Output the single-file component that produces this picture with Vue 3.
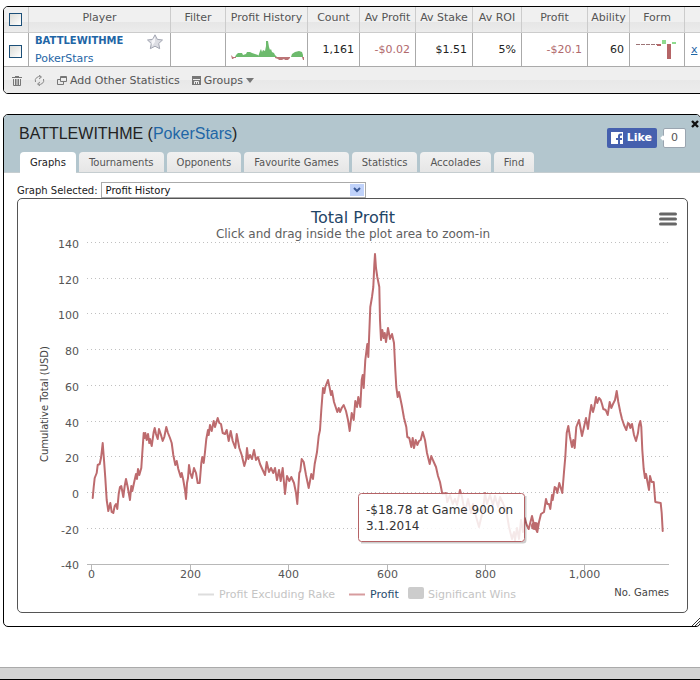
<script setup>
import { ref } from 'vue'

const columns = [
  { key: 'player', label: 'Player' },
  { key: 'filter', label: 'Filter' },
  { key: 'history', label: 'Profit History' },
  { key: 'count', label: 'Count' },
  { key: 'av-profit', label: 'Av Profit' },
  { key: 'av-stake', label: 'Av Stake' },
  { key: 'roi', label: 'Av ROI' },
  { key: 'profit', label: 'Profit' },
  { key: 'ability', label: 'Ability' },
  { key: 'form', label: 'Form' }
]

const stats = [
  { key: 'count', value: '1,161' },
  { key: 'av-profit', value: '-$0.02', loss: true },
  { key: 'av-stake', value: '$1.51' },
  { key: 'roi', value: '5%' },
  { key: 'profit', value: '-$20.1', loss: true },
  { key: 'ability', value: '60' }
]

const tabs = ['Graphs', 'Tournaments', 'Opponents', 'Favourite Games', 'Statistics', 'Accolades', 'Find']
const activeTab = ref('Graphs')
const graph = ref('Profit History')

const yTicks = [140, 120, 100, 80, 60, 40, 20, 0, -20, -40]
const xTicks = [0, 200, 400, 600, 800, 1000]

function yPos(value) {
  return Math.round(493 - value * 1.786) - 0.5
}

function xPos(games) {
  return Math.round(91 + games * 0.4925) + 0.5
}

const profitLine = [
  '92.7,498 93.7,487 94.7,478 96.7,473 97.7,465 99.7,464 101,458 101.7,452 102.7,443 104,460',
  '105.3,478 106.7,500 108.3,511 109.3,507 110.3,503 111.7,512 113.3,513 114.7,506 116,504',
  '117.3,509 118.7,494 120,487 121.3,486 123.3,497 124.7,486 126,479 127.7,487 130,500 131.3,486',
  '132.3,491 134,483 136,474 137,479 138,469 139.3,475 141.3,468 142.7,447 143.7,433 144.7,438',
  '145.3,433 146.7,440 148,434 149.3,443 150,439 151.7,446 153.7,432 154.7,428 156,434 157.7,439',
  '159,429 160.7,434 162.7,441 164.3,437 166.3,427 168,433 170,438 171.7,443 173.3,455 175.3,465',
  '176.7,461 178.3,469 180.7,477 181.7,473 183.3,480 185,490 186,499 187,483 188,478 189,465',
  '190.3,473 192,478 194,468 196,473 197.7,483 199.7,483 201.3,463 202.3,457 203.7,463 205,452',
  '206.3,439 208,430 208.7,435 210,425 211.7,431 213.7,421 215,427 217.7,418 219.3,423 221,424',
  '222.7,433 225,434 226.7,430 228.7,441 230.7,431 232.7,441 235.3,448 236.7,434 239.3,448',
  '241.7,455 244.3,466 246,460 247,448 248.3,459 250,455 252,459 254,450 256,460 258,457 260,464',
  '262.7,470 265,475 266.7,462 269,472 271,468 273.3,473 275,468 277,480 279,470 280.7,481',
  '282.7,468 285,494 287,476 289.3,481 291.3,477 294,483 296,493 297.3,504 298.7,482 299.3,473',
  '300.3,471 301.7,459 303.7,462 306,475 308.7,488 311.3,474 313,479 314.7,464 317,452 318.7,436',
  '320,430 321.3,410 323,388 324.3,393 325.3,387 328,380 329.7,388 331,395 332,391 334,402',
  '337.3,412 338.7,408 340,412 341.7,408 343.7,405 346,411 348,420 349.7,431 351.7,413 353.7,420',
  '355.3,401 357,407 358.3,397 360.3,407 361.7,380 362.7,375 363.7,388 365.3,360 367.3,344',
  '368.3,357 370.3,307 372,297 373.3,287 374.3,265 375,254 376,268 377.3,277 379.3,287 380,320',
  '381,340 382.3,330 383.7,338 384.7,333 386,342 388,328 390,339 392,334 394,343 395.3,370',
  '396.3,387 397.7,397 399,392 401.7,405 404,418 406.3,427 407.3,437 409.3,438 411.3,447 412.7,438',
  '414,448 415.7,440 417.3,445 419,441 420.7,440 422.7,432 425,440 427,453 429.7,464 431.3,456',
  '433.3,461 436,467 438,476 440,482 442.3,494 446,493 447.3,502 450,495 452.7,504 455,499 457,505',
  '460,490 462,497 465,513 468,499 471,513 473,504 475,513 479,527 483,510 485,493 487,504 490,495',
  '493,505 495,496 498,507 500,497 503,503 506.7,513 509,527 512,539 514,532 515,540 517,528',
  '519,539 521,520 523,532 524.7,518 526.7,525 528.7,529 532,516 534,525 537.3,532 539,522',
  '541,514 544,512 546,499 547.3,504 549,504 550.3,509 552,495 552.7,500 554.7,487 556,488',
  '557.3,493 559.3,483 562.3,493 564,472 565.3,457 566.7,433 568.3,426 570,437 572,447 573.3,440',
  '574.7,448 576.3,427 579,420 582,436 584,427 586,418 588,429 589.7,415 591.3,405 593,412',
  '594.3,407 596,397 597.3,403 599,398 600.7,400 602,404 603.3,409 605.7,410 607.7,415 609.7,402',
  '611.3,408 613,404 615,400 616.7,391 618.3,402 620.3,412 622,419 624,425 626.3,430 628,423',
  '629.3,424 630.3,428 632,424 634,435 636,441 638,433 639,425 640.3,421 641.3,427 642.3,450',
  '643.7,469 645,478 646,474 649,490 650,476 651.7,482 653.7,482 655.3,502 660.7,503 661.7,513',
  '662.7,531'
].join(' ')
</script>

<template>
  <div class="page">
    <section class="panel results">
      <table>
        <thead>
          <tr>
            <th class="col-check"><input type="checkbox" aria-label="Select all players" /></th>
            <th v-for="col in columns" :key="col.key" :class="'col-' + col.key">{{ col.label }}</th>
            <th class="col-remove"></th>
          </tr>
        </thead>
        <tbody>
          <tr>
            <td class="col-check"><input type="checkbox" aria-label="Select BATTLEWITHME" /></td>
            <td class="player">
              <div class="player-cell">
                <div class="names">
                  <a href="#" class="name">BATTLEWITHME</a>
                  <a href="#" class="network">PokerStars</a>
                </div>
                <button class="star" aria-label="Favourite">
                  <svg width="16" height="16" viewBox="0 0 16 16">
                    <path d="M8 .8 10.300 5.300l5.200.7-3.800 3.500 1 5.200L8 12.200l-4.700 2.500 1-5.200L.5 6l5.200-.7z" fill="#dcdde3" stroke="#a3a6b2" />
                    <path d="M8 3v5L5 12l-.5-5z" fill="#f6f6f9" />
                  </svg>
                </button>
              </div>
            </td>
            <td></td>
            <td class="spark">
              <svg width="76" height="24" viewBox="0 0 76 24">
                <path d="M6 18l1-2 2-2h4l1 2 3-1 1-2h3l2 1 3 1 3 1 1 2zM29 18l1-3 1-3 1-2 1 3 1-2 2 1 1-5V2h2l1 6 1 3 1-1 1 3 2 1 1 2 2 2zM62 18l1-3 3-2 4-1 3 1 1 3v2z" fill="#6dba6d" />
                <path d="M2 16l2 2h3v1H5l-1 1H3zM46 18h15v1l-2 2h-3l-1-1-2 1h-3l-1-1-3-1zM73 18h2v3h-1z" fill="#bb7476" />
              </svg>
            </td>
            <td v-for="stat in stats" :key="stat.key" class="number" :class="{ loss: stat.loss }">{{ stat.value }}</td>
            <td class="spark">
              <svg width="42" height="24" viewBox="0 0 42 24">
                <path d="M0 5.500h21" stroke="#9d7476" stroke-dasharray="4 1" />
                <path d="M21 5h4v2h-4zM31 5h4v15h-4z" fill="#b56567" />
                <path d="M26 1h4v4h-4zM36 3h4v2h-4z" fill="#8edb8e" />
              </svg>
            </td>
            <td class="remove"><a href="#">x</a></td>
          </tr>
        </tbody>
      </table>
      <div class="toolbar">
        <button class="tool" aria-label="Delete">
          <svg width="10" height="11" viewBox="0 0 10 11">
            <path d="M0 2.500h10M3 1.500h4M1.500 4v6.500h7V4M3.500 4v6M5 4v6M6.500 4v6" fill="none" stroke="#777" />
          </svg>
        </button>
        <button class="tool" aria-label="Refresh">
          <svg width="11" height="11" viewBox="0 0 11 11">
            <path d="M1.500 7A4 4 0 0 1 7 2M9.500 4A4 4 0 0 1 4 9M5 0l2.500 2L5 4M6 7 3.500 9 6 11" fill="none" stroke="#888" />
          </svg>
        </button>
        <button class="tool">
          <svg width="10" height="9" viewBox="0 0 10 9">
            <path d="M3.500.5h6v5h-6zM3.500 1.500h6M3 3.500H.5v5h6V6" fill="none" stroke="#777" />
          </svg>
          <span>Add Other Statistics</span>
        </button>
        <button class="tool">
          <svg width="9" height="9" viewBox="0 0 9 9">
            <path d="M0 0h9v9H0z" fill="#777" />
            <path d="M1 3.500h7M2.500 8V5.500h4V8M4.500 6v2" fill="none" stroke="#eee" />
          </svg>
          <span>Groups</span>
          <svg width="8" height="5" viewBox="0 0 8 5"><path d="M0 0h8L4 5z" fill="#777" /></svg>
        </button>
      </div>
    </section>

    <section class="panel detail">
      <header>
        <div class="title-row">
          <h1>BATTLEWITHME (<a href="#">PokerStars</a>)</h1>
          <div class="like">
            <button class="like-button">
              <svg width="12" height="12" viewBox="0 0 12 12">
                <path d="M0 0h12v12H9V8h2V6H9V4.500q0-1 1-1h1v-2H9.500Q7 1.500 7 4v2H5v2h2v4H0z" fill="#fff" />
              </svg>
              <span>Like</span>
            </button>
            <span class="like-count">0</span>
          </div>
          <button class="close" aria-label="Close">
            <svg width="8" height="8" viewBox="0 0 8 8">
              <path d="m1 1 6 6M7 1 1 7" stroke="#111" stroke-width="2.400" />
            </svg>
          </button>
        </div>
        <nav>
          <button
            v-for="tab in tabs"
            :key="tab"
            :class="{ active: tab === activeTab }"
            @click="activeTab = tab"
          >{{ tab }}</button>
        </nav>
      </header>

      <div class="content">
        <div class="selector">
          <label for="graph">Graph Selected:</label>
          <div class="select-box">
            <select id="graph" v-model="graph">
              <option>Profit History</option>
            </select>
            <span class="arrow">
              <svg width="8" height="6" viewBox="0 0 8 6"><path d="m1 1 3 3 3-3" fill="none" stroke="#3c5a96" stroke-width="2" /></svg>
            </span>
          </div>
        </div>

        <div class="chart">
          <svg class="plot" viewBox="18 199 669 413">
            <text class="chart-title" x="353" y="223">Total Profit</text>
            <text class="subtitle" x="353" y="238">Click and drag inside the plot area to zoom-in</text>

            <g v-for="tick in yTicks" :key="tick">
              <line v-if="tick !== -40" class="grid" x1="87" x2="669" :y1="yPos(tick)" :y2="yPos(tick)" />
              <text class="axis y" x="79" :y="yPos(tick) + 5">{{ tick }}</text>
            </g>
            <path class="axis-line" d="M87 564.5H669" />
            <g v-for="tick in xTicks" :key="tick">
              <path class="axis-line" :d="`M${xPos(tick)} 565v5`" />
              <text class="axis x" :x="xPos(tick)" y="578">{{ tick.toLocaleString('en-US') }}</text>
            </g>
            <text class="axis-name" text-anchor="middle" transform="translate(48 404) rotate(-90)">Cumulative Total (USD)</text>
            <text class="axis-name" text-anchor="end" x="669" y="596">No. Games</text>

            <polyline class="profit" :points="profitLine" />
            <circle cx="535" cy="526" r="4" fill="#bd6b6e" />

            <g class="tooltip">
              <path class="shadow" d="M361 542.500h162q2.500 0 2.500-2.500v-44" />
              <rect x="358.5" y="493.5" width="166" height="48" rx="3" />
              <text x="366" y="514">-$18.78 at Game 900 on</text>
              <text x="366" y="530">3.1.2014</text>
            </g>

            <g class="legend">
              <path d="M198 594.5h16" stroke="#ddd" stroke-width="2" />
              <text x="219" y="598">Profit Excluding Rake</text>
              <path d="M349 594.5h16" stroke="#d79c9e" stroke-width="2" />
              <text class="on" x="370" y="598">Profit</text>
              <rect x="408" y="587" width="16" height="12" rx="2" fill="#ccc" />
              <text x="428" y="598">Significant Wins</text>
            </g>
          </svg>
          <button class="menu" aria-label="Chart menu">
            <svg width="18" height="14" viewBox="0 0 18 14">
              <path d="M1.500 2h15M1.500 7h15M1.500 12h15" stroke="#666" stroke-width="3" stroke-linecap="round" />
            </svg>
          </button>
        </div>
      </div>
      <svg class="grip" width="8" height="8" viewBox="0 0 8 8">
        <path d="M0 8 8 0M3 8l5-5M6 8l2-2" stroke="#333" />
      </svg>
    </section>

    <footer></footer>
  </div>
</template>

<style>
body {
  margin: 0;
  background: #fff;
}
</style>

<style scoped>
.page {
  box-sizing: border-box;
  min-height: 100vh;
  display: flex;
  flex-direction: column;
  padding-top: 6px;
  overflow: hidden;
  font-family: "DejaVu Sans", Verdana, sans-serif;
  font-size: 11px;
  color: #222;
}

button {
  font: inherit;
  color: inherit;
  border: 0;
  padding: 0;
  background: none;
  cursor: pointer;
}

svg {
  display: block;
}

a {
  color: #1f66a6;
  text-decoration: none;
}

.panel {
  border: 1px solid #000;
  border-radius: 5px;
  margin-left: 3px;
  overflow: hidden;
}

.results {
  margin-right: -20px;
  margin-bottom: 20px;
}

table {
  width: 100%;
  table-layout: fixed;
  border-collapse: separate;
  border-spacing: 0;
}

th,
td {
  box-sizing: border-box;
  padding: 0;
  border-right: 1px solid #aaa;
  border-bottom: 1px solid #aaa;
}

th {
  height: 26px;
  padding-bottom: 4px;
  font-weight: normal;
  color: #555;
  white-space: nowrap;
  background: linear-gradient(#f0f0f0 60%, #e6e6e6 60%, #ececec);
  border-color: #ccc;
}

td {
  height: 34px;
}

.col-check { width: 25px; }
.col-player { width: 142px; }
.col-filter { width: 55px; }
.col-history { width: 82px; }
.col-count { width: 52px; }
.col-av-profit { width: 56px; }
.col-av-stake { width: 57px; }
.col-roi { width: 49px; }
.col-profit { width: 66px; }
.col-ability { width: 42px; }
.col-form { width: 55px; }

th.col-check {
  padding: 0;
}

td.col-check {
  padding-top: 4px;
}

.col-check input {
  appearance: none;
  display: block;
  box-sizing: border-box;
  width: 13px;
  height: 13px;
  margin: 0 0 0 5px;
  border: 1px solid #1c4f78;
  border-radius: 0;
  background: linear-gradient(135deg, #dcdcd7, #fff);
}

.player-cell {
  display: flex;
  justify-content: space-between;
  padding: 0 7px 0 6px;
}

.names {
  display: flex;
  flex-direction: column;
  gap: 4px;
  line-height: 14px;
}

.name {
  font-size: 10px;
  font-weight: bold;
}

.star {
  align-self: flex-start;
}

.spark svg {
  margin: 2px auto 0;
}

.number {
  text-align: right;
  padding-right: 5px;
}

.loss {
  color: #b0696c;
}

.remove {
  padding-left: 6px;
}

.remove a {
  text-decoration: underline;
}

.toolbar {
  height: 26px;
  display: flex;
  align-items: center;
  gap: 12px;
  padding-left: 8px;
  color: #555;
  background: linear-gradient(#efefef 50%, #e8e8e8 50%, #ececec);
}

.tool {
  display: flex;
  align-items: center;
  gap: 3px;
}

.detail {
  position: relative;
  margin-right: -1px;
}

header {
  background: #b3c6ce;
  border-bottom: 1px solid #c5cdd0;
}

.title-row {
  display: flex;
  align-items: center;
  height: 37px;
  padding-left: 15px;
}

h1 {
  flex: 1;
  margin: 0;
  font: 16px "Liberation Sans", Arial, sans-serif;
  color: #222;
}

.like {
  display: flex;
  align-items: center;
  gap: 6px;
  margin-top: 8px;
}

.like-button {
  display: flex;
  align-items: center;
  gap: 4px;
  height: 20px;
  padding: 0 5px 0 4px;
  border-radius: 2px;
  background: #4560ae;
  color: #fff;
  font-weight: bold;
}

.like-count {
  position: relative;
  box-sizing: border-box;
  width: 23px;
  height: 20px;
  line-height: 18px;
  text-align: center;
  border: 1px solid #9aa5b0;
  border-radius: 2px;
  background: #fff;
  color: #555;
}

.like-count::before {
  content: "";
  position: absolute;
  left: -3px;
  top: 7px;
  width: 4px;
  height: 4px;
  background: #fff;
  transform: rotate(45deg);
}

.close {
  align-self: flex-start;
  margin: 5px 1px 0 5px;
}

nav {
  display: flex;
  gap: 3px;
  padding-left: 16px;
}

nav button {
  height: 20px;
  padding: 0 10px;
  font-size: 10px;
  color: #555;
  border-radius: 4px 4px 0 0;
  background: linear-gradient(#f1f1f1, #e6e6e6);
}

nav button.active {
  color: #222;
  background: #fff;
  margin-bottom: -1px;
  height: 21px;
}

.content {
  padding: 9px 12px 13px 13px;
}

.selector {
  display: flex;
  align-items: center;
  gap: 3px;
  font-size: 10px;
}

.select-box {
  position: relative;
  width: 265px;
}

select {
  display: block;
  appearance: none;
  box-sizing: border-box;
  width: 100%;
  height: 16px;
  padding: 0 4px;
  border: 1px solid #aaa;
  border-radius: 0;
  background: #fff;
  color: #111;
  font: inherit;
}

.arrow {
  position: absolute;
  top: 2px;
  right: 2px;
  bottom: 2px;
  width: 14px;
  display: flex;
  align-items: center;
  justify-content: center;
  background: #c0d2fa;
  pointer-events: none;
}

.chart {
  position: relative;
  border: 1px solid #555;
  border-radius: 5px;
}

.plot {
  width: 100%;
  height: auto;
}

.chart-title {
  font-size: 16px;
  fill: #1f4566;
  text-anchor: middle;
}

.subtitle {
  font-size: 12px;
  fill: #606060;
  text-anchor: middle;
}

.grid {
  stroke: #c0c0c0;
  stroke-dasharray: 1 3;
}

.axis {
  font-size: 11px;
  fill: #555;
}

.axis.x {
  text-anchor: middle;
}

.axis.y {
  text-anchor: end;
}

.axis-line {
  stroke: #b8b8b8;
}

.axis-name {
  font-size: 10px;
  fill: #444;
}

.profit {
  fill: none;
  stroke: #bd6b6e;
  stroke-width: 2;
  stroke-linejoin: round;
  stroke-linecap: round;
}

.tooltip rect {
  fill: #fff;
  fill-opacity: 0.85;
  stroke: #b56265;
}

.tooltip .shadow {
  fill: none;
  stroke: #000;
  stroke-opacity: 0.2;
  stroke-width: 2;
}

.tooltip text {
  font-size: 12px;
  fill: #333;
}

.legend text {
  font-size: 11px;
  fill: #c4c4c4;
}

.legend .on {
  fill: #274b6d;
}

.menu {
  position: absolute;
  top: 13px;
  right: 10px;
}

.grip {
  position: absolute;
  right: 0;
  bottom: 0;
}

footer {
  box-sizing: border-box;
  height: 13px;
  margin-top: auto;
  background: #d3d3d3;
  border-top: 1px solid #aaa;
  border-bottom: 1px solid #000;
}
</style>
